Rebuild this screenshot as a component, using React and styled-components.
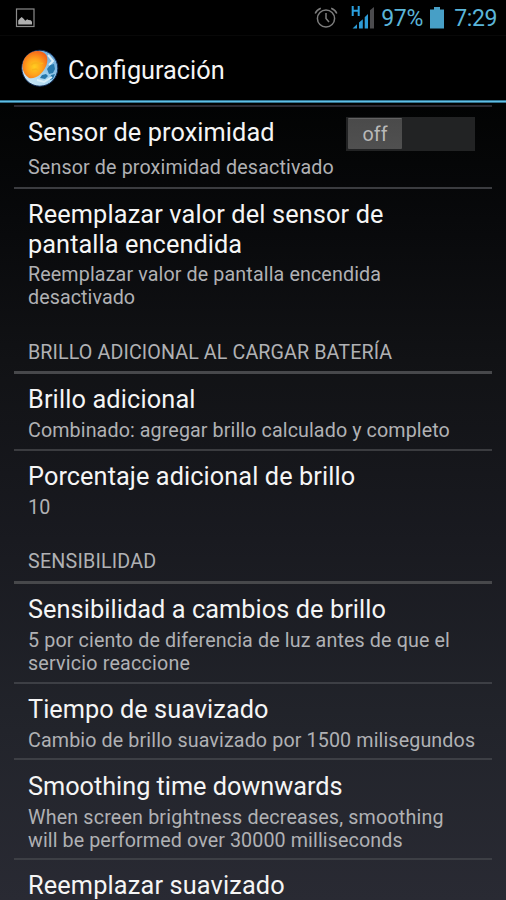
import React from "react";
import styled, { createGlobalStyle } from "styled-components";

const Global = createGlobalStyle`
  * { box-sizing: border-box; }
  body { margin: 0; background: #000; overflow: hidden; }
`;
const Screen = styled.div`
  width: 506px;
  height: 900px;
  overflow: hidden;
  display: flex;
  flex-direction: column;
  font-family: Roboto, "Noto Sans", sans-serif;
  color: #f5f5f5;
  background: linear-gradient(180deg, #000 0px, #020303 105px, #08090b 220px, #111215 360px, #191a20 540px, #22242b 730px, #292a33 900px);
`;
const StatusBar = styled.header`
  height: 36px;
  flex: none;
  display: flex;
  align-items: center;
  padding: 1px 9px 0 15px;
  background: #000;
  border-bottom: 1px solid #080808;
  color: #5bb5d8;
`;
const StatusIcon = styled.svg`
  display: block;
  flex: none;
  margin-left: ${(p) => p.$gap || 0}px;
`;
const Spacer = styled.div`
  flex: 1;
`;
const StatusText = styled.span`
  font-size: 23px;
  line-height: 34px;
  padding-top: 1px;
  white-space: nowrap;
  letter-spacing: ${(p) => p.$ls || 0}px;
  margin-left: ${(p) => p.$gap}px;
`;
const ActionBar = styled.div`
  height: 64px;
  flex: none;
  display: flex;
  align-items: center;
  padding: 2px 0 0 20px;
  background: #000;
`;
const AccentRule = styled.div`
  height: 3px;
  flex: none;
  background: linear-gradient(#2f7593 0 1px, #5fbfe6 1px 2px, #33718c 2px 3px);
`;
const Heading = styled.h1`
  margin: 3px 0 0 8px;
  font-size: 25.3px;
  font-weight: 400;
  line-height: 30px;
  letter-spacing: ${(p) => p.$ls}px;
`;
const List = styled.main`
  flex: 1;
  margin: 0 14px;
  padding-top: 2px;
`;
const Row = styled.section`
  height: ${(p) => p.$h}px;
  padding: ${(p) => p.$top ?? 11}px 0 0 14px;
  border-top: ${(p) => p.$line ?? 2}px solid ${(p) => p.$color || "#3b3c40"};
  display: flex;
  justify-content: space-between;
`;
const Title = styled.h2`
  margin: 0;
  font-size: 25.3px;
  font-weight: 400;
  line-height: 29.6px;
  white-space: nowrap;
`;
const Summary = styled.p`
  margin: ${(p) => p.$gap ?? 4}px 0 0;
  font-size: 19.7px;
  line-height: 23px;
  color: #b0b1b4;
  white-space: nowrap;
`;
const Line = styled.span`
  display: block;
  width: max-content;
  letter-spacing: ${(p) => p.$ls || 0}px;
`;
const Category = styled.h3`
  height: ${(p) => p.$h}px;
  margin: 0;
  padding: ${(p) => p.$top}px 0 0 14px;
  font-size: 19.7px;
  font-weight: 400;
  line-height: 23px;
  color: #b0b1b4;
  white-space: nowrap;
`;
const Toggle = styled.button`
  width: 129px;
  height: 34px;
  margin: -1px 17px 0 0;
  padding: 1px;
  border: 0;
  background: #222324;
  display: flex;
`;
const Thumb = styled.span`
  width: 54px;
  height: 31px;
  margin-left: 1px;
  border-radius: 1px;
  border-top: 1px solid #626262;
  background: linear-gradient(#4a4a4a, #505050);
  color: #b9b9b9;
  font-family: Roboto, sans-serif;
  font-size: 19.7px;
  line-height: 31px;
  letter-spacing: 0.1px;
  text-align: center;
`;

const Lines = ({ items }) =>
  items.map(([text, ls]) => <Line key={text} $ls={ls}>{text}</Line>);

const Preference = ({ title, summary, gap, children, ...row }) => (
  <Row {...row}>
    <div>
      <Title><Lines items={title} /></Title>
      {summary && <Summary $gap={gap}><Lines items={summary} /></Summary>}
    </div>
    {children}
  </Row>
);

const PictureIcon = () => (
  <StatusIcon width="20" height="20" viewBox="0 0 20 20">
    <rect x="1.5" y="1" width="17.5" height="17.5" fill="none" stroke="#8b8b8b" strokeWidth="1.2" />
    <path d="M3.2 16.5v-4l1.5-1.8 2-1.6 2.2 2 1.3 1.6 2-1.4 1.3.8 2.3.1 1.2 1.6v2.7z" fill="#b0b0b0" />
  </StatusIcon>
);
const AlarmIcon = () => (
  <StatusIcon width="24" height="24" viewBox="0 0 24 24" fill="none" stroke="#7d7d7d" strokeWidth="1.5">
    <circle cx="12" cy="12.5" r="8.6" />
    <path d="M12 7v5.500l3 3.500M1.200 7.500Q2.700 3.700 6.800 2.200M17.200 2.200Q21.300 3.700 22.800 7.500" />
  </StatusIcon>
);
const SignalIcon = () => (
  <StatusIcon $gap={13} width="24" height="24" viewBox="0 0 24 24">
    <path d="M1.700 0v10M7.700 0v10M1.700 4.800h6" stroke="#2ba0df" strokeWidth="2" fill="none" />
    <path d="M1.500 22.500L6 18.300v4.200zM8 16.500l3.800-3.300v9.300H8zM13.700 11.300L17 8v14.500h-3.300z" fill="#2d9bd6" />
    <path d="M19 4.200L23 1v21.500h-4z" fill="#4b4b4e" />
  </StatusIcon>
);
const BatteryIcon = () => (
  <StatusIcon $gap={6} width="16" height="24" viewBox="0 0 16 24">
    <path d="M1 3.500h4V1h6v2.500h4V22.500H1z" fill="#479fc6" />
  </StatusIcon>
);
const AppIcon = () => (
  <svg width="40" height="40" viewBox="0 0 40 40">
    <defs>
      <radialGradient id="sun" cx="48%" cy="58%" r="60%">
        <stop offset="0" stopColor="#ffce20" />
        <stop offset=".5" stopColor="#ffa31c" />
        <stop offset="1" stopColor="#f4641a" />
      </radialGradient>
      <linearGradient id="moon" x1="1" y1="0" x2="0" y2="1">
        <stop offset="0" stopColor="#5a9bd0" />
        <stop offset=".5" stopColor="#9dd0ed" />
        <stop offset="1" stopColor="#dceff8" />
      </linearGradient>
    </defs>
    <circle cx="19.8" cy="19.2" r="18" fill="url(#moon)" stroke="#102c58" strokeWidth="1" />
    <path d="M27 20l3-4 4-1 1 5-2 4-4 1zM22 26l4-1 2 2-3 3-5-1zM31 26l4-1-2 5-3 1z" fill="#2677aa" />
    <path d="M28 6l5 6-4 4M17 31l7 2 8-5" fill="none" stroke="#d9eff9" strokeWidth="2" />
    <path d="M9 29C1 24 .6 12 7 6.500C13 .8 22 .5 26.300 6C29.200 12 26 20 20.500 25C16.500 28.700 12 30 9 29z" fill="url(#sun)" />
    <path d="M11 16q3-3 7-2t5 0M12 21l4-1 3 2" stroke="#f9b41b" strokeWidth="1.500" fill="none" />
  </svg>
);

export default function App() {
  return (
    <>
      <Global />
      <Screen>
        <StatusBar>
          <PictureIcon />
          <Spacer />
          <AlarmIcon />
          <SignalIcon />
          <StatusText $gap={6} $ls={-0.2}>97%</StatusText>
          <BatteryIcon />
          <StatusText $gap={9} $ls={-0.4}>7:29</StatusText>
        </StatusBar>
        <ActionBar>
          <AppIcon />
          <Heading $ls={0}>Configuración</Heading>
        </ActionBar>
        <AccentRule />
        <List>
          <Preference $h={82} $color="#2b2830" gap={8}
            title={[["Sensor de proximidad", 0.1]]}
            summary={[["Sensor de proximidad desactivado", 0.13]]}>
            <Toggle><Thumb>off</Thumb></Toggle>
          </Preference>
          <Preference $h={141}
            title={[["Reemplazar valor del sensor de", 0.13], ["pantalla encendida", 0.08]]}
            summary={[["Reemplazar valor de pantalla encendida", 0.12], ["desactivado", 0.07]]} />
          <Category $h={43} $top={13}><Line $ls={0.1}>BRILLO ADICIONAL AL CARGAR BATERÍA</Line></Category>
          <Preference $h={78} $line={3} $color="#47484b"
            title={[["Brillo adicional", 0.14]]}
            summary={[["Combinado: agregar brillo calculado y completo", 0.1]]} />
          <Preference $h={77}
            title={[["Porcentaje adicional de brillo", 0.08]]}
            summary={[["10", 0.3]]} />
          <Category $h={55} $top={24}><Line $ls={0.2}>SENSIBILIDAD</Line></Category>
          <Preference $h={101} $line={3} $color="#47484b"
            title={[["Sensibilidad a cambios de brillo", 0.07]]}
            summary={[["5 por ciento de diferencia de luz antes de que el", 0.13], ["servicio reaccione", 0.2]]} />
          <Preference $h={76} $color="#3d3f45"
            title={[["Tiempo de suavizado", 0.04]]}
            summary={[["Cambio de brillo suavizado por 1500 milisegundos", 0.12]]} />
          <Preference $h={100} $color="#3d3f45" $top={12}
            title={[["Smoothing time downwards", -0.03]]}
            summary={[["When screen brightness decreases, smoothing", 0.17], ["will be performed over 30000 milliseconds", 0.1]]} />
          <Preference $h={76} $color="#3d3f45" title={[["Reemplazar suavizado", 0.15]]} />
        </List>
      </Screen>
    </>
  );
}
